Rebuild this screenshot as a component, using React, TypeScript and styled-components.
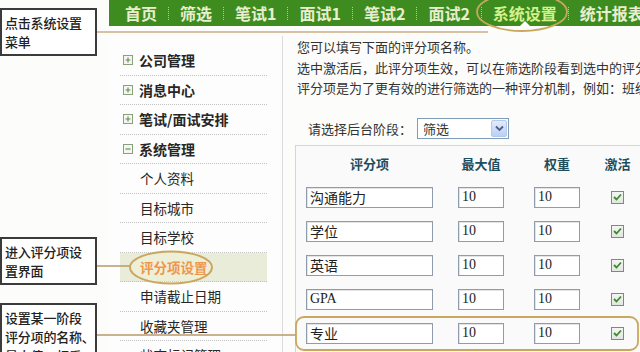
import React from "react";
import styled, { createGlobalStyle } from "styled-components";

const Global = createGlobalStyle`
  html, body { margin: 0; padding: 0; background: #fff; }
  body { font-family: "Noto Sans CJK SC", "Noto Sans", sans-serif; }
  * { box-sizing: border-box; }
`;

const Page = styled.div`
  position: relative;
  width: 640px;
  height: 352px;
  overflow: hidden;
  display: flex;
  background: #fcfcfb;
`;

const NoteColumn = styled.div`
  width: 109px;
  flex: none;
  display: flex;
  flex-direction: column;
`;

const Note = styled.div<{ $top: number }>`
  margin-top: ${(p) => p.$top}px;
  width: 97px;
  border: 2px solid #3b3b3b;
  background: #fff;
  padding: 3px 0 3px 3px;
  font-size: 13px;
  line-height: 19px;
  color: #222;
  font-weight: 500;
  white-space: nowrap;
  letter-spacing: -0.2px;
`;

const NoteLine = styled.div``;

const Shell = styled.div`
  flex: 1;
  min-width: 0;
  display: flex;
  flex-direction: column;
`;

const NavBar = styled.nav`
  height: 26px;
  flex: none;
  background: #3e8c1f;
  display: flex;
  align-items: center;
  padding-left: 5px;
  white-space: nowrap;
  overflow: hidden;
`;

const NavItem = styled.span<{ $active?: boolean }>`
  position: relative;
  padding: 0 11px;
  font-size: 16px;
  font-weight: 700;
  line-height: 26px;
  color: ${(p) => (p.$active ? "#d3f28f" : "#e8efcf")};
  ${(p) =>
    p.$active &&
    `
    &::after {
      content: "";
      position: absolute;
      left: 50%;
      bottom: 0;
      margin-left: -5px;
      border-left: 5px solid transparent;
      border-right: 5px solid transparent;
      border-bottom: 5px solid #fff;
    }
  `}
`;

const NavSep = styled.span`
  width: 0;
  height: 13px;
  border-left: 1px dotted #a8d08c;
`;

const Body = styled.div`
  flex: 1;
  display: flex;
  margin-top: 10px;
  min-height: 0;
`;

const Sidebar = styled.aside`
  width: 174px;
  flex: none;
  border-right: 1px solid #dcdcdc;
  padding: 10px 15px 0 11px;
  background: #fdfdfd;
`;

const MenuRow = styled.div<{ $sub?: boolean; $active?: boolean }>`
  height: 29.5px;
  display: flex;
  align-items: center;
  gap: 6px;
  border-bottom: 1px dotted #c2c2c2;
  padding-left: ${(p) => (p.$sub ? 20 : 3)}px;
  font-size: ${(p) => (p.$sub ? 13.5 : 14)}px;
  font-weight: ${(p) => (p.$sub && !p.$active ? 400 : 700)};
  color: ${(p) => (p.$active ? "#e8761c" : "#262626")};
  background: ${(p) => (p.$active ? "#e9ecd8" : "transparent")};
  white-space: nowrap;
`;

const ToggleBox = styled.svg`
  width: 10px;
  height: 10px;
  flex: none;
`;

const Main = styled.main`
  flex: 1;
  min-width: 0;
  padding: 1px 0 0 12px;
  overflow: hidden;
`;

const Intro = styled.div`
  padding-left: 2px;
  font-size: 13px;
  line-height: 20.5px;
  color: #333;
  white-space: nowrap;
`;

const StageRow = styled.div`
  margin-top: 19.5px;
  padding-left: 13px;
  height: 21px;
  display: flex;
  align-items: center;
`;

const StageLabel = styled.span`
  font-size: 13px;
  color: #333;
  white-space: nowrap;
`;

const SelectBox = styled.div`
  margin-left: 5px;
  width: 92px;
  height: 21px;
  border: 1px solid #7f9db9;
  background: #fff;
  display: flex;
  align-items: center;
  justify-content: space-between;
  padding-left: 5px;
  font-size: 13px;
  color: #333;
`;

const SelectArrow = styled.span`
  width: 16px;
  height: 17px;
  margin-right: 1px;
  border: 1px solid #b4c8ee;
  border-radius: 2px;
  background: linear-gradient(#e2ebfd, #bccff5);
  display: flex;
  align-items: center;
  justify-content: center;
`;

const TableBox = styled.div`
  margin-top: 6px;
  width: 360px;
  border: 1px solid #d6d6d6;
  background: #fafafa;
  padding-left: 10px;
  height: 260px;
`;

const Grid = styled.div`
  display: grid;
  grid-template-columns: 127px 96px 56px 65px;
  grid-auto-rows: 34px;
  align-items: center;
  justify-items: center;
`;

const HeadCell = styled.div`
  font-size: 13px;
  font-weight: 700;
  color: #1e4d5d;
`;

const Field = styled.input<{ $w: number }>`
  width: ${(p) => p.$w}px;
  height: 21px;
  border: 1px solid #8e9cae;
  background: #fff;
  padding: 0 0 0 3px;
  font-family: "Liberation Serif", "Noto Sans CJK SC", serif;
  font-size: 14px;
  color: #222;
  outline: none;
  box-shadow: inset 1px 1px 0 #e4e4e4;
`;

const CheckBox = styled.span`
  width: 13px;
  height: 13px;
  border: 1px solid #7d8a7d;
  background: linear-gradient(#f4f4f4, #e2e6e2);
  display: flex;
  align-items: center;
  justify-content: center;
`;

const Overlay = styled.svg`
  position: absolute;
  left: 0;
  top: 0;
  width: 640px;
  height: 352px;
  pointer-events: none;
`;

const Toggle = ({ open }: { open?: boolean }) => (
  <ToggleBox viewBox="0 0 10 10">
    <rect x="0.5" y="0.5" width="9" height="9" fill="#f4f6f0" stroke="#8aa07c" />
    <path d={open ? "M2.5 5h5" : "M2.5 5h5M5 2.5v5"} stroke="#6f8a62" strokeWidth="1.2" />
  </ToggleBox>
);

const navItems = ["首页", "筛选", "笔试1", "面试1", "笔试2", "面试2", "系统设置", "统计报表"];

const rows = ["沟通能力", "学位", "英语", "GPA", "专业"];

export default function App() {
  return (
    <>
      <Global />
      <Page>
        <NoteColumn>
          <Note $top={8}>
            <NoteLine>点击系统设置</NoteLine>
            <NoteLine>菜单</NoteLine>
          </Note>
          <Note $top={181}>
            <NoteLine>进入评分项设</NoteLine>
            <NoteLine>置界面</NoteLine>
          </Note>
          <Note $top={18}>
            <NoteLine>设置某一阶段</NoteLine>
            <NoteLine>评分项的名称、</NoteLine>
            <NoteLine>最大值、权重</NoteLine>
          </Note>
        </NoteColumn>
        <Shell>
          <NavBar>
            {navItems.map((n, i) => (
              <React.Fragment key={n}>
                {i > 0 && <NavSep />}
                <NavItem $active={n === "系统设置"}>{n}</NavItem>
              </React.Fragment>
            ))}
          </NavBar>
          <Body>
            <Sidebar>
              <MenuRow>
                <Toggle />
                公司管理
              </MenuRow>
              <MenuRow>
                <Toggle />
                消息中心
              </MenuRow>
              <MenuRow>
                <Toggle />
                笔试/面试安排
              </MenuRow>
              <MenuRow>
                <Toggle open />
                系统管理
              </MenuRow>
              <MenuRow $sub>个人资料</MenuRow>
              <MenuRow $sub>目标城市</MenuRow>
              <MenuRow $sub>目标学校</MenuRow>
              <MenuRow $sub $active>
                评分项设置
              </MenuRow>
              <MenuRow $sub>申请截止日期</MenuRow>
              <MenuRow $sub>收藏夹管理</MenuRow>
              <MenuRow $sub>状态标记管理</MenuRow>
            </Sidebar>
            <Main>
              <Intro>您可以填写下面的评分项名称。</Intro>
              <Intro>选中激活后，此评分项生效，可以在筛选阶段看到选中的评分项。</Intro>
              <Intro>评分项是为了更有效的进行筛选的一种评分机制，例如：班级排名。</Intro>
              <StageRow>
                <StageLabel>请选择后台阶段：</StageLabel>
                <SelectBox>
                  筛选
                  <SelectArrow>
                    <svg width="9" height="7" viewBox="0 0 9 7">
                      <path d="M1 1.5l3.5 3.5 3.5-3.5" fill="none" stroke="#4d6185" strokeWidth="1.8" />
                    </svg>
                  </SelectArrow>
                </SelectBox>
              </StageRow>
              <TableBox>
                <Grid>
                  <HeadCell>评分项</HeadCell>
                  <HeadCell>最大值</HeadCell>
                  <HeadCell>权重</HeadCell>
                  <HeadCell>激活</HeadCell>
                  {rows.map((r) => (
                    <React.Fragment key={r}>
                      <Field $w={127} readOnly value={r} />
                      <Field $w={46} readOnly value="10" />
                      <Field $w={46} readOnly value="10" />
                      <CheckBox>
                        <svg width="9" height="8" viewBox="0 0 9 8">
                          <path d="M1 4l2.5 2.5L8 1.5" fill="none" stroke="#3f8a2c" strokeWidth="1.8" />
                        </svg>
                      </CheckBox>
                    </React.Fragment>
                  ))}
                </Grid>
              </TableBox>
            </Main>
          </Body>
        </Shell>
        <Overlay viewBox="0 0 640 352">
          <path d="M97 32H488" stroke="#cdae86" strokeWidth="1.5" fill="none" />
          <ellipse cx="522" cy="12" rx="45" ry="19" stroke="#c9a75e" strokeWidth="1.8" fill="none" />
          <path d="M97 266H130" stroke="#b99868" strokeWidth="1.5" fill="none" />
          <ellipse cx="171" cy="267.5" rx="41" ry="16" stroke="#c9a75e" strokeWidth="2" fill="rgba(255,248,210,0.25)" />
          <path d="M97 335H296" stroke="#b99868" strokeWidth="1.5" fill="none" />
          <rect x="296" y="317" width="342" height="33" rx="8" stroke="#c9a75e" strokeWidth="1.8" fill="none" />
        </Overlay>
      </Page>
    </>
  );
}
